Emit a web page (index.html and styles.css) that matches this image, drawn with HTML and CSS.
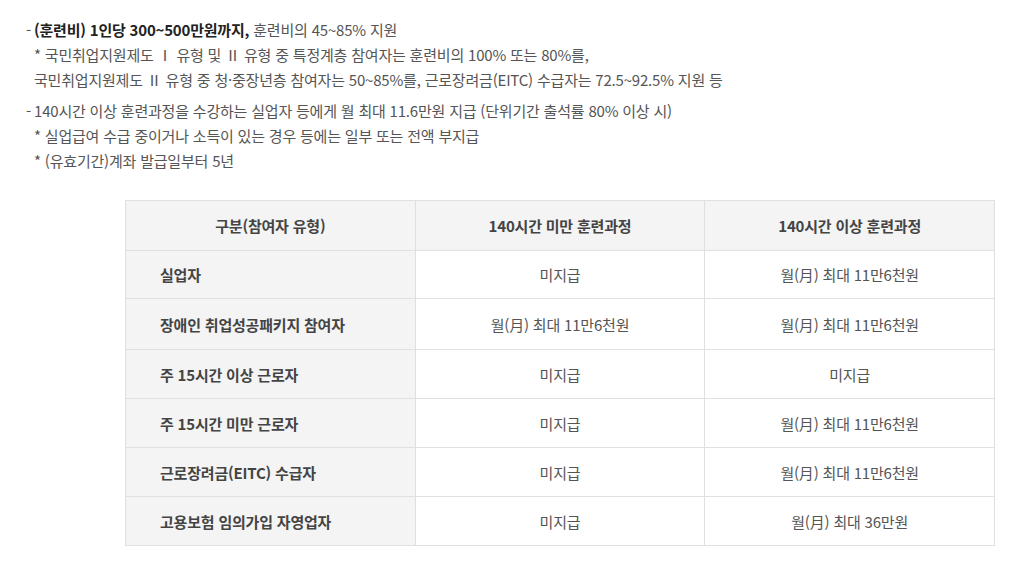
FILE: index.html
```html
<!DOCTYPE html>
<html lang="ko">
<head>
<meta charset="utf-8">
<link rel="stylesheet" href="styles.css">
</head>
<body>
<div class="page">
  <ul class="info">
    <li class="item">
      <p class="line"><span class="dash">-</span><strong>(훈련비) 1인당 300~500만원까지,</strong> 훈련비의 45~85% 지원</p>
      <p class="sub">* 국민취업지원제도 Ⅰ 유형 및 Ⅱ 유형 중 특정계층 참여자는 훈련비의 100% 또는 80%를,</p>
      <p class="sub">국민취업지원제도 Ⅱ 유형 중 청·중장년층 참여자는 50~85%를, 근로장려금(EITC) 수급자는 72.5~92.5% 지원 등</p>
    </li>
    <li class="item">
      <p class="line"><span class="dash">-</span>140시간 이상 훈련과정을 수강하는 실업자 등에게 월 최대 11.6만원 지급 (단위기간 출석률 80% 이상 시)</p>
      <p class="sub">* 실업급여 수급 중이거나 소득이 있는 경우 등에는 일부 또는 전액 부지급</p>
      <p class="sub">* (유효기간)계좌 발급일부터 5년</p>
    </li>
  </ul>
  <table class="tbl">
    <thead>
      <tr><th>구분(참여자 유형)</th><th>140시간 미만 훈련과정</th><th>140시간 이상 훈련과정</th></tr>
    </thead>
    <tbody>
      <tr class="short"><th class="rh">실업자</th><td>미지급</td><td>월(月) 최대 11만6천원</td></tr>
      <tr class="tall"><th class="rh">장애인 취업성공패키지 참여자</th><td>월(月) 최대 11만6천원</td><td>월(月) 최대 11만6천원</td></tr>
      <tr><th class="rh">주 15시간 이상 근로자</th><td>미지급</td><td>미지급</td></tr>
      <tr><th class="rh">주 15시간 미만 근로자</th><td>미지급</td><td>월(月) 최대 11만6천원</td></tr>
      <tr><th class="rh">근로장려금(EITC) 수급자</th><td>미지급</td><td>월(月) 최대 11만6천원</td></tr>
      <tr><th class="rh">고용보험 임의가입 자영업자</th><td>미지급</td><td>월(月) 최대 36만원</td></tr>
    </tbody>
  </table>
</div>
</body>
</html>
```
FILE: styles.css
```css
html, body {
  margin: 0;
  padding: 0;
  background: #fff;
}
body {
  font-family: "Noto Sans CJK KR", "Noto Sans", sans-serif;
  color: #555;
  font-size: 15px;
  letter-spacing: -0.2px;
}
.page {
  padding: 17px 0 0 26px;
}
.info {
  list-style: none;
  margin: 0;
  padding: 0;
}
.item {
  margin: 0 0 6px 0;
}
.line, .sub {
  margin: 0;
  line-height: 25px;
  height: 25px;
  white-space: nowrap;
}
.dash {
  display: inline-block;
  width: 8px;
}
.line strong {
  color: #222;
  font-weight: 700;
}
.sub {
  padding-left: 8px;
}
.tbl {
  margin: 27px 0 0 99px;
  width: 870px;
  border-collapse: collapse;
  table-layout: fixed;
  border: 1px solid #ddd;
}
.tbl th, .tbl td {
  border: 1px solid #e0e0e0;
  height: 48px;
  padding: 0;
  text-align: center;
  font-weight: 400;
  color: #555;
}
.tbl thead th {
  background: #f4f4f4;
  font-weight: 700;
  color: #444;
  height: 49px;
}
.tbl th.rh {
  background: #f4f4f4;
  font-weight: 700;
  color: #444;
  text-align: left;
  padding-left: 34px;
}
.tbl tr.short th, .tbl tr.short td {
  height: 47px;
}
.tbl tr.tall th, .tbl tr.tall td {
  height: 50px;
}
```
